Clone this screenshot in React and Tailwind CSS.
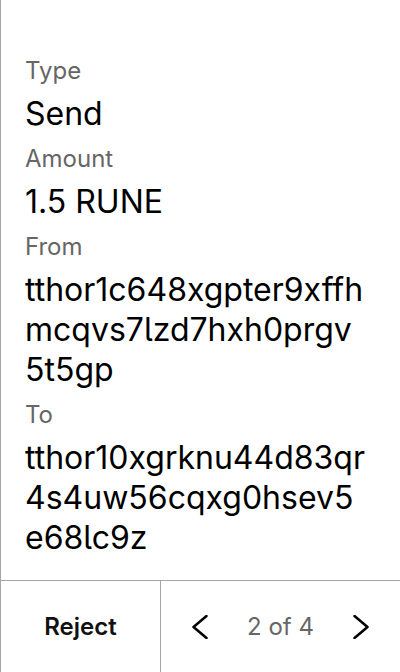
import React from "react";

const fields = [
  { label: "Type", lines: ["Send"] },
  { label: "Amount", lines: ["1.5 RUNE"] },
  { label: "From", lines: ["tthor1c648xgpter9xffh", "mcqvs7lzd7hxh0prgv", "5t5gp"] },
  { label: "To", lines: ["tthor10xgrknu44d83qr", "4s4uw56cqxg0hsev5", "e68lc9z"] },
];

function Chevron({ dir }) {
  const pts = dir === "left" ? "18.5,1 5.5,12 18.5,23" : "5.5,1 18.5,12 5.5,23";
  return (
    <svg width="24" height="24" viewBox="0 0 24 24" fill="none">
      <polyline points={pts} stroke="#000" strokeWidth="2.5" strokeLinecap="round" strokeLinejoin="round" />
    </svg>
  );
}

export default function App() {
  return (
    <div
      className="w-[400px] h-[672px] bg-white flex flex-col border-l border-[#a6a6a6] overflow-hidden [font-feature-settings:'cv05']"
      style={{ fontFamily: "Inter, 'Noto Sans', sans-serif" }}
    >
      <div className="flex-1 pt-[57px] pl-[24px] pr-[24px] flex flex-col gap-[11px]">
        {fields.map((f) => (
          <div key={f.label} className="flex flex-col">
            <div className="text-[24px] leading-[28px] text-[#666666]">{f.label}</div>
            <div className="mt-[9px] text-[32px] leading-[40px] text-black">
              {f.lines.map((l) => (
                <div key={l}>{l}</div>
              ))}
            </div>
          </div>
        ))}
      </div>
      <div className="h-[92px] shrink-0 border-t border-[#a6a6a6] flex">
        <div className="w-[160px] border-r border-[#a6a6a6] flex items-center justify-center text-[24px] font-semibold text-[#111111]">
          Reject
        </div>
        <div className="flex-1 flex items-center justify-between px-[27px]">
          <Chevron dir="left" />
          <span className="text-[24px] text-[#666666]">2 of 4</span>
          <Chevron dir="right" />
        </div>
      </div>
    </div>
  );
}
